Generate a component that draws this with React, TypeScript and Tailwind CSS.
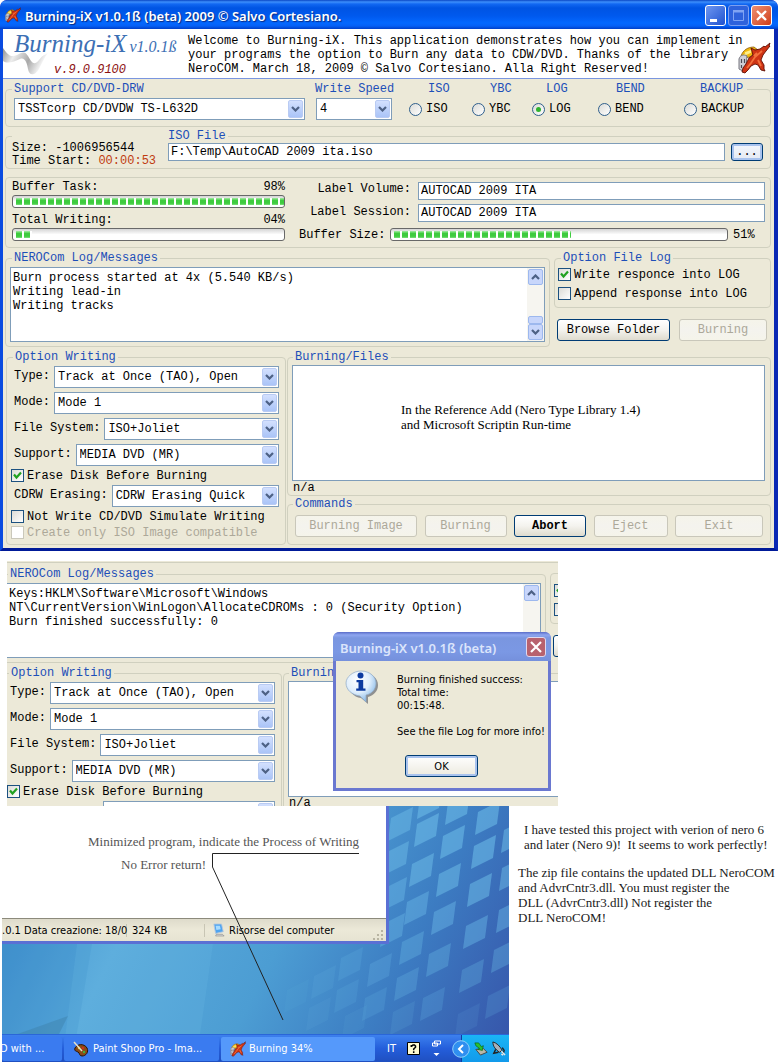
import { useId, type ReactNode } from "react";

const MONO = "font-['Liberation_Mono',monospace] text-[12px] leading-[14px]";
const UI = "font-['DejaVu_Sans_Condensed','DejaVu_Sans',sans-serif] text-[11px] leading-[13px]";
const TITLE = "font-['Noto_Sans',sans-serif] text-[13px] font-semibold";
const GROUP = "min-w-0 rounded-[4px] border border-[#d0d0bf]";
const LEGEND = "px-[2px] leading-[12px] text-[#1d4fb8]";

function NeroIcon({ className }: { className: string }) {
  return (
    <svg viewBox="0 0 33 32" className={className} aria-hidden="true">
      <path d="M3 14C5 8 10 5 16 5l4 3-8 7-6 1Z" fill="#f2b90f" stroke="#8a5a08" strokeWidth=".8" />
      <path d="M7 11l8-3M6 13l7-3" stroke="#fff08a" strokeWidth="1.400" />
      <path d="M1 17c1-4 5-5 8-3l-1 10-3 5-4-2Z" fill="#cfcfd6" stroke="#77777f" strokeWidth="1" />
      <path d="M3.500 17v4m3-4v4M3.500 23v3" stroke="#4b4b55" strokeWidth="1.200" />
      <path
        d="M13 6l4 2 5-1 4-3 1 1 5-4-1 3 1 0-4 5-3 4-2 5 3 5 0 4 1 2-4-1-3-5-3-1-4 2-3 4-3 3-3-1 1-4 3-4 3-6 4-3Z"
        fill="#cf3414"
        stroke="#5f0f05"
        strokeWidth=".9"
      />
      <path d="M24 9l-7 6-4 6-4 5M20 18l3 6M19 11l-3 3" stroke="#f4703c" strokeWidth="1.800" fill="none" />
    </svg>
  );
}

function Chevron({ up = false }: { up?: boolean }) {
  return (
    <svg viewBox="0 0 9 6" className="h-[6px] w-[9px]" aria-hidden="true">
      <path d={up ? "M1 5 4.500 1.500 8 5" : "M1 1 4.500 4.500 8 1"} fill="none" stroke="#4d6185" strokeWidth="2.200" />
    </svg>
  );
}

function Combo({ id, value, className = "", label }: { id?: string; value: string; className?: string; label?: string }) {
  return (
    <span className={`relative flex h-[22px] ${className}`}>
      <select
        id={id}
        aria-label={label}
        className="w-full appearance-none border border-[#7f9db9] bg-white pl-[3px] pr-[20px] text-black outline-none"
      >
        <option>{value}</option>
      </select>
      <span className="pointer-events-none absolute right-[2px] top-[2px] flex h-[18px] w-[15px] items-center justify-center rounded-[2px] border border-[#b9cbf3] bg-linear-to-b from-[#d3e0fe] to-[#aac4f7]">
        <Chevron />
      </span>
    </span>
  );
}

function ComboRow({ label, value }: { label: string; value: string }) {
  const id = useId();
  return (
    <div className="flex gap-[4px] pl-[5px]">
      <label htmlFor={id} className="shrink-0 pt-[3px]">
        {label}
      </label>
      <Combo id={id} value={value} className="min-w-0 flex-1" />
    </div>
  );
}

function Check({ label, name, checked = false, disabled = false }: { label?: string; name?: string; checked?: boolean; disabled?: boolean }) {
  return (
    <label className={`flex h-[13px] items-center gap-[3px] whitespace-nowrap ${disabled ? "text-[#aca899]" : ""}`}>
      <span className="relative flex size-[13px] shrink-0">
        <input
          type="checkbox"
          aria-label={name}
          defaultChecked={checked}
          disabled={disabled}
          className="peer size-[13px] appearance-none border border-[#1c5180] bg-linear-to-br from-[#dcdcd7] to-white disabled:border-[#cac8bb] disabled:from-white"
        />
        <svg viewBox="0 0 13 13" className="pointer-events-none absolute inset-0 hidden peer-checked:block" aria-hidden="true">
          <path d="M3 5.500 5.500 8.500 10 3.500" fill="none" stroke="#21a121" strokeWidth="2.200" />
        </svg>
      </span>
      {label}
    </label>
  );
}

function Radio({ label, checked = false }: { label: string; checked?: boolean }) {
  return (
    <label className="flex items-center gap-[4px]">
      <span className="relative flex size-[13px]">
        <input
          type="radio"
          name="mode"
          defaultChecked={checked}
          className="peer size-[13px] appearance-none rounded-full border border-[#2f5f8c] bg-linear-to-br from-[#dcdcd7] to-white"
        />
        <span className="pointer-events-none absolute left-[4px] top-[4px] hidden size-[5px] rounded-full bg-[#2fb32f] peer-checked:block" />
      </span>
      {label}
    </label>
  );
}

function Button({ children, name, className = "", disabled = false }: { children?: ReactNode; name?: string; className?: string; disabled?: boolean }) {
  return (
    <button
      type="button"
      aria-label={name}
      disabled={disabled}
      className={`h-[22px] whitespace-nowrap rounded-[3px] border border-[#003c74] bg-linear-to-b from-white via-[#f4f3ee] to-[#dedbce] disabled:border-[#c9c7ba] disabled:from-[#f5f4ea] disabled:to-[#f5f4ea] disabled:text-[#aca899] ${className}`}
    >
      {children}
    </button>
  );
}

function Bar({ fill, value, label, className = "" }: { fill: number; value: number; label: string; className?: string }) {
  return (
    <div
      role="progressbar"
      aria-label={label}
      aria-valuenow={value}
      className={`h-[13px] rounded-[3px] border border-[#686868] bg-linear-to-b from-[#d5d5d5] via-white to-white py-[2px] pl-[3px] ${className}`}
    >
      <div className="h-full overflow-hidden" style={{ width: `${fill}%` }}>
        <div className="h-full bg-[repeating-linear-gradient(90deg,transparent_0_6px,#ffffff_6px_8px),linear-gradient(#a5eba5,#3ecb3e_35%,#3ecb3e_75%,#7fdf7f)]" />
      </div>
    </div>
  );
}

function LogGroup({ text, thumb = false }: { text: string; thumb?: boolean }) {
  return (
    <fieldset className={`${GROUP} flex-1 px-[4px] pb-[4px]`}>
      <legend className={`${LEGEND} ml-[2px]`}>NEROCom Log/Messages</legend>
      <div className="relative mt-[3px] flex h-[75px]">
        <textarea
          aria-label="Log messages"
          readOnly
          defaultValue={text}
          className="w-full resize-none overflow-hidden border border-[#7f9db9] bg-white pl-[2px] pr-[18px] pt-[3px] outline-none"
        />
        <div className="absolute bottom-[1px] right-[1px] top-[1px] flex w-[17px] flex-col bg-[#f6f5f0] p-[1px]">
          <button type="button" aria-label="Scroll up" className="flex h-[16px] items-center justify-center rounded-[2px] border border-[#9db8ee] bg-[#c8d6fb]">
            <Chevron up />
          </button>
          {thumb && <div className="mt-auto h-[8px] rounded-[2px] border border-[#9db8ee] bg-[#c8d6fb]" />}
          <button type="button" aria-label="Scroll down" className={`${thumb ? "" : "mt-auto"} flex h-[16px] items-center justify-center rounded-[2px] border border-[#9db8ee] bg-[#c8d6fb]`}>
            <Chevron />
          </button>
        </div>
      </div>
    </fieldset>
  );
}

function WritingOptions() {
  return (
    <>
      <div className="-ml-[2px] flex flex-col gap-[4px]">
        <ComboRow label="Type:" value="Track at Once (TAO), Open" />
        <ComboRow label="Mode:" value="Mode 1" />
        <ComboRow label="File System:" value="ISO+Joliet" />
        <ComboRow label="Support:" value="MEDIA DVD (MR)" />
      </div>
      <Check label="Erase Disk Before Burning" checked />
    </>
  );
}

/* Lower part of the window: log, options, file list and commands. */
function LowerPanels() {
  return (
    <>
      <div className="flex gap-[4px]">
        <LogGroup thumb text={"Burn process started at 4x (5.540 KB/s)\nWriting lead-in\nWriting tracks"} />
        <div className="w-[217px] shrink-0">
          <fieldset className={`${GROUP} flex flex-col pb-[7px] pl-[3px]`}>
            <legend className={`${LEGEND} ml-[3px]`}>Option File Log</legend>
            <div className="flex flex-col gap-[6px] pt-[4px]">
              <Check label="Write responce into LOG" checked />
              <Check label="Append response into LOG" />
            </div>
          </fieldset>
          <div className="mt-[11px] flex justify-between pl-[3px] pr-[4px]">
            <Button className="w-[113px]">Browse Folder</Button>
            <Button className="w-[88px]" disabled>
              Burning
            </Button>
          </div>
        </div>
      </div>

      <div className="mt-[4px] flex gap-[1px] pl-[1px]">
        <fieldset className={`${GROUP} w-[280px] shrink-0 pb-[4px] pl-[4px] pr-[6px]`}>
          <legend className={`${LEGEND} ml-[2px]`}>Option Writing</legend>
          <div className="flex flex-col gap-[3px] pt-[3px]">
            <WritingOptions />
            <div className="-ml-[2px]">
              <ComboRow label="CDRW Erasing:" value="CDRW Erasing Quick" />
            </div>
            <Check label="Not Write CD/DVD Simulate Writing" />
            <Check label="Create only ISO Image compatible" disabled />
          </div>
        </fieldset>
        <div className="min-w-0 flex-1">
          <fieldset className={`${GROUP} pl-[4px] pr-[5px]`}>
            <legend className={`${LEGEND} ml-[1px]`}>Burning/Files</legend>
            <div className="mt-[2px] flex h-[116px] items-center border border-[#7f9db9] bg-white pl-[108px] pb-[12px]">
              <p className="font-['Liberation_Serif',serif] text-[13px] leading-[15px]">
                In the Reference Add (Nero Type Library 1.4)
                <br />
                and Microsoft Scriptin Run-time
              </p>
            </div>
            <p className="pl-[1px]">n/a</p>
          </fieldset>
          <fieldset className={`${GROUP} mt-[2px] px-[7px] pb-[7px]`}>
            <legend className={`${LEGEND} -ml-[2px]`}>Commands</legend>
            <div className="flex justify-between pt-[5px]">
              <Button className="w-[122px]" disabled>
                Burning Image
              </Button>
              <Button className="w-[82px]" disabled>
                Burning
              </Button>
              <Button className="w-[72px] font-bold">Abort</Button>
              <Button className="w-[74px]" disabled>
                Eject
              </Button>
              <Button className="w-[88px]" disabled>
                Exit
              </Button>
            </div>
          </fieldset>
        </div>
      </div>
    </>
  );
}

function TitleBar() {
  const frame = "flex size-[21px] items-center justify-center rounded-[3px] border border-white";
  return (
    <div className="flex h-[29px] items-center rounded-t-[7px] bg-[linear-gradient(#0a46c4_0,#3d8ffc_2px,#1268f2_4px,#0054e3_8px,#0059ee_16px,#0468ff_23px,#0560f5_26px,#003fc8_29px)] pl-[5px] pr-[6px]">
      <NeroIcon className="size-[16px]" />
      <h1 className={`${TITLE} ml-[4px] flex-1 whitespace-nowrap pt-[2px] text-white [text-shadow:1px_1px_1px_#0a2a80]`}>
        Burning-iX v1.0.1ß (beta) 2009 © Salvo Cortesiano.
      </h1>
      <div className="flex gap-[2px] pt-[2px]">
        <button type="button" aria-label="Minimize" className={`${frame} bg-linear-to-br from-[#6f96f0] to-[#1f51cf]`}>
          <svg viewBox="0 0 19 19" className="size-full" aria-hidden="true">
            <path d="M4 13h7v3H4z" fill="#fff" />
          </svg>
        </button>
        <button type="button" aria-label="Maximize" disabled className="flex size-[21px] rounded-[3px] border border-[#7d9ff0] bg-[#2e62dc]">
          <svg viewBox="0 0 19 19" className="size-full" aria-hidden="true">
            <path d="M4.500 5v9.500h10V5" fill="none" stroke="#7fa3f3" />
            <path d="M4 4h11v2.500H4z" fill="#7fa3f3" />
          </svg>
        </button>
        <button type="button" aria-label="Close" className={`${frame} bg-linear-to-br from-[#ee8f70] to-[#cf3a12]`}>
          <svg viewBox="0 0 19 19" className="size-full" aria-hidden="true">
            <path d="m5 5 9 9m0-9-9 9" stroke="#fff" strokeWidth="2.300" />
          </svg>
        </button>
      </div>
    </div>
  );
}

function Header() {
  return (
    <header className="flex h-[50px] justify-between border-b border-[#7a96df] bg-white">
      <div className="relative w-[185px] shrink-0">
        <svg viewBox="0 0 60 34" className="absolute bottom-0 left-0 h-[34px] w-[60px]" aria-hidden="true">
          <defs>
            <linearGradient id="swoosh" x2="1" y2="0.300">
              <stop offset="0" stopColor="#8f8f8f" />
              <stop offset=".3" stopColor="#ededed" />
              <stop offset=".65" stopColor="#a9a9a9" />
              <stop offset="1" stopColor="#ffffff" />
            </linearGradient>
          </defs>
          <path d="M0 4c6 9 9 9 14 7 5-3 8-4 11 1 4 7 6 10 11 4 3-4 5-5 9-7-4 5-6 10-9 16-4 7-10 7-11 0-1-6-3-12-8-10C11 18 4 20 0 17Z" fill="url(#swoosh)" />
        </svg>
        <div className="relative flex flex-col pl-[11px] pt-[2px] font-['Liberation_Serif',serif] italic leading-[25px] text-[#3c6fb4]">
          <span className="flex items-baseline gap-[3px] whitespace-nowrap">
            <span className="text-[25px]">Burning-iX</span>
            <span className="text-[16px]">v1.0.1ß</span>
          </span>
          <span className={`${MONO} pl-[40px] pt-[4px] text-[#8b1010]`}>v.9.0.9100</span>
        </div>
      </div>
      <p className="min-w-0 flex-1 whitespace-nowrap pt-[5px] text-black">
        Welcome to Burning-iX. This application demonstrates how you can implement in
        <br />
        your programs the option to Burn any data to CDW/DVD. Thanks of the library
        <br />
        NeroCOM. March 18, 2009 © Salvo Cortesiano. Alla Right Reserved!
      </p>
      <NeroIcon className="mr-[3px] mt-[13px] h-[32px] w-[33px] shrink-0" />
    </header>
  );
}

function MainWindow() {
  const field = "h-[18px] min-w-0 flex-1 border border-[#7f9db9] bg-white px-[2px] text-black outline-none";
  return (
    <section className={`${MONO} overflow-hidden rounded-t-[7px] bg-[#0831d9] text-black`}>
      <TitleBar />
      <div className="border-b-[3px] border-l-[3px] border-r-[4px] border-b-[#001a98] border-l-[#0a4be0] border-r-[#0a28b4] bg-[#ece9d8]">
        <Header />
        <div className="pb-[3px] pl-[2px] pr-[3px]">
          <fieldset className={`${GROUP} mt-[4px] pb-[6px] pl-[8px]`}>
            <legend className={`${LEGEND} -ml-[2px] grid w-[calc(100%-21px)] grid-cols-[1fr_113px_62px_56px_70px_84px_45px]`}>
              <span>Support CD/DVD-DRW</span>
              <span className="whitespace-nowrap">Write Speed</span>
              <span>ISO</span>
              <span>YBC</span>
              <span>LOG</span>
              <span>BEND</span>
              <span>BACKUP</span>
            </legend>
            <div className="grid grid-cols-[1fr_93px_63px_60px_66px_86px_86px] pt-[3px]">
              <Combo label="Support CD/DVD-DRW" value="TSSTcorp CD/DVDW TS-L632D" className="mr-[11px]" />
              <Combo label="Write Speed" value="4" className="w-[76px]" />
              <Radio label="ISO" />
              <Radio label="YBC" />
              <Radio label="LOG" checked />
              <Radio label="BEND" />
              <Radio label="BACKUP" />
            </div>
          </fieldset>

          <fieldset className={`${GROUP} mt-[3px] pl-[6px] pr-[7px]`}>
            <legend className={`${LEGEND} pl-[156px]`}>ISO File</legend>
            <div className="flex h-[26px]">
              <p className="w-[156px] shrink-0 leading-[13px]">
                Size: -1006956544
                <br />
                Time Start: <span className="text-[#c03c10]">00:00:53</span>
              </p>
              <div className="flex flex-1 gap-[6px] pt-[1px]">
                <input aria-label="ISO File" defaultValue={"F:\\Temp\\AutoCAD 2009 ita.iso"} className={field} />
                <button
                  type="button"
                  aria-label="Browse ISO file"
                  className="h-[18px] w-[32px] rounded-[3px] border border-[#003c74] bg-linear-to-b from-[#f4f7fd] to-[#e4e9f2] leading-[14px] shadow-[inset_0_0_0_2px_#a9c3ee]"
                >
                  ...
                </button>
              </div>
            </div>
          </fieldset>

          <div className={`${GROUP} mt-[8px] flex pb-[6px] pl-[6px] pr-[5px]`}>
            <div className="w-[273px] shrink-0 pt-[2px]">
              <p className="flex justify-between">
                <span>Buffer Task:</span>
                <span>98%</span>
              </p>
              <Bar label="Buffer Task" value={98} fill={100} className="mt-[1px]" />
              <p className="mt-[5px] flex justify-between">
                <span>Total Writing:</span>
                <span>04%</span>
              </p>
              <Bar label="Total Writing" value={4} fill={6} className="mt-[1px]" />
            </div>
            <div className="ml-[14px] flex flex-1 flex-col pt-[4px]">
              <div className="flex gap-[7px]">
                <label htmlFor="volume" className="w-[112px] text-right">
                  Label Volume:
                </label>
                <input id="volume" defaultValue="AUTOCAD 2009 ITA" className={field} />
              </div>
              <div className="mt-[4px] flex gap-[7px]">
                <label htmlFor="session" className="w-[112px] pt-[1px] text-right">
                  Label Session:
                </label>
                <input id="session" defaultValue="AUTOCAD 2009 ITA" className={field} />
              </div>
              <div className="mt-[6px] flex h-[13px] items-center gap-[5px]">
                <span className="leading-[12px]">Buffer Size:</span>
                <Bar label="Buffer Size" value={51} fill={53} className="flex-1" />
                <span className="w-[32px] leading-[12px]">51%</span>
              </div>
            </div>
          </div>

          <div className="mt-[4px]">
            <LowerPanels />
          </div>
        </div>
      </div>
    </section>
  );
}

function MessageDialog() {
  return (
    <div role="dialog" aria-label="Burning-iX v1.0.1ß (beta)" className="absolute left-[326px] top-[71px] w-[218px] rounded-t-[7px] border-x-[3px] border-b-[3px] border-[#6a78d0] bg-[#ece9d8]">
      <div className="-mx-[3px] flex h-[29px] items-center justify-between rounded-t-[6px] bg-[linear-gradient(#5a6cc8_0,#8ea6f0_3px,#7a96e0_6px,#7b98e4_20px,#7590dc_29px)] pl-[7px] pr-[5px]">
        <h2 className={`${TITLE} whitespace-nowrap pt-[2px] text-[#dce5fb]`}>Burning-iX v1.0.1ß (beta)</h2>
        <button type="button" aria-label="Close message" className="flex size-[20px] rounded-[3px] border border-[#e0d8ee] bg-[#b8626e]">
          <svg viewBox="0 0 18 18" className="size-full" aria-hidden="true">
            <path d="m4 4 10 10m0-10L4 14" stroke="#fff" strokeWidth="2.200" />
          </svg>
        </button>
      </div>
      <div className={`${UI} flex flex-col px-[9px] pb-[11px] pt-[12px] text-black`}>
        <div className="flex">
          <svg viewBox="0 0 34 34" className="-mt-[3px] size-[34px] shrink-0" aria-hidden="true">
            <defs>
              <radialGradient id="bubble" cx=".4" cy=".3" r=".7">
                <stop offset="0" stopColor="#ffffff" />
                <stop offset=".55" stopColor="#e1effc" />
                <stop offset="1" stopColor="#8bbbe8" />
              </radialGradient>
            </defs>
            <path d="M18 3c9 0 15 5 15 12 0 6-4 10-10 12v7l-7-6C8 27 4 21 4 15 4 8 10 3 18 3Z" fill="#666a72" opacity=".7" />
            <path d="M16 1c9 0 15 6 15 12 0 6-4 11-10 12v7l-6-6C7 25 1 20 1 13 1 7 8 1 16 1Z" fill="url(#bubble)" stroke="#8fa9c6" strokeWidth=".7" />
            <circle cx="15.500" cy="5.600" r="3" fill="#0d3ba0" />
            <path d="M11.500 10h6.700v8.500h2.300v2.200h-9.300v-2.200h2.300v-6.300h-2Z" fill="#0d3ba0" />
          </svg>
          <p className="ml-[18px] whitespace-nowrap">
            Burning finished success:
            <br />
            Total time:
            <br />
            00:15:48.
            <br />
            <br />
            See the file Log for more info!
          </p>
        </div>
        <button
          type="button"
          className="ml-[60px] mt-[17px] h-[22px] w-[73px] rounded-[3px] border border-[#003c74] bg-linear-to-b from-white to-[#eceadf] shadow-[inset_0_0_0_2px_#a9c3ee]"
        >
          OK
        </button>
      </div>
    </div>
  );
}

/* A cut-out of the window once burning has finished, with the message on top. */
function FinishedCrop() {
  return (
    <section className={`${MONO} relative ml-[7px] mt-[10px] h-[245px] w-[551px] overflow-hidden bg-[#ece9d8] text-black`}>
      <div className="-ml-[6px] w-[766px] pt-[1px]">
        <div className="mb-[5px] h-px bg-[#d0d0bf]" />
        <div className="flex gap-[4px]">
          <LogGroup
            text={"Keys:HKLM\\Software\\Microsoft\\Windows\nNT\\CurrentVersion\\WinLogon\\AllocateCDROMs : 0 (Security Option)\nBurn finished successfully: 0"}
          />
          <div className="w-[217px] shrink-0 pt-[5px]">
            <div className={`${GROUP} flex flex-col gap-[6px] pb-[7px] pl-[3px] pt-[10px]`}>
              <Check name="Write responce into LOG" checked />
              <Check name="Append response into LOG" />
            </div>
            <div className="mt-[11px] pl-[3px]">
              <Button name="Browse Folder" className="w-[113px]" />
            </div>
          </div>
        </div>
        <div className="mt-[4px] flex gap-[1px] pl-[1px]">
          <fieldset className={`${GROUP} w-[280px] shrink-0 pb-[4px] pl-[4px] pr-[6px]`}>
            <legend className={`${LEGEND} ml-[2px]`}>Option Writing</legend>
            <div className="flex flex-col gap-[3px] pt-[3px]">
              <WritingOptions />
              <Combo label="CDRW Erasing" value="" className="ml-[96px]" />
            </div>
          </fieldset>
          <fieldset className={`${GROUP} min-w-0 flex-1 pl-[4px] pr-[5px]`}>
            <legend className={`${LEGEND} ml-[1px]`}>Burning/Files</legend>
            <div className="mt-[2px] h-[116px] border border-[#7f9db9] bg-white" />
            <p className="pl-[1px] leading-[12px]">n/a</p>
          </fieldset>
        </div>
      </div>
      <MessageDialog />
    </section>
  );
}

/* Centres of the wallpaper tiles and their opacity. */
const TILES: [number, number, number][] = [
  [401, 18, 0.5], [397, 52, 0.5], [395, 88, 0.45], [393, 124, 0.4],
  [430, -4, 0.6], [427, 24, 0.6], [422, 64, 0.55], [417, 102, 0.45], [412, 142, 0.35], [407, 178, 0.28], [403, 212, 0.15],
  [458, 2, 0.6], [453, 36, 0.6], [449, 74, 0.55], [444, 112, 0.45], [439, 154, 0.35], [433, 198, 0.22],
  [488, 12, 0.6], [484, 46, 0.6], [480, 84, 0.55], [476, 126, 0.45], [472, 170, 0.3], [468, 214, 0.12],
  [514, 30, 0.55], [512, 68, 0.5], [509, 110, 0.45], [504, 150, 0.35], [498, 196, 0.2],
  [380, 164, 0.25], [375, 198, 0.2], [351, 158, 0.2], [347, 190, 0.16], [324, 176, 0.14], [319, 208, 0.1], [355, 216, 0.1], [297, 190, 0.08],
];

function Wallpaper() {
  return (
    <svg viewBox="0 0 507 256" preserveAspectRatio="none" className="absolute inset-0 size-full" aria-hidden="true">
      <defs>
        <linearGradient id="sky" x1="0" y1="0.600" x2="1" y2="0.850">
          <stop offset="0" stopColor="#4594cf" />
          <stop offset=".2" stopColor="#5aaadb" />
          <stop offset=".5" stopColor="#4c9dd3" />
          <stop offset=".75" stopColor="#3c7cc2" />
          <stop offset="1" stopColor="#3758ac" />
        </linearGradient>
      </defs>
      <rect width="507" height="256" fill="url(#sky)" />
      <path d="M70 256 90 138H0v118Z" fill="#2f84c4" opacity=".2" />
      <path d="M10 230 66 210 56 230Z" fill="#3a789f" opacity=".35" />
      <path d="M211 138 194 256H60L75 138Z" fill="#70bde4" opacity=".2" />
      {TILES.map(([x, y, opacity]) => (
        <path key={`${x}-${y}`} transform={`translate(${x - 2} ${y})`} d="m-10-6 22-11-3 23-22 11Z" fill="#6bb9e6" opacity={opacity} />
      ))}
    </svg>
  );
}

function Taskbar() {
  const task = "flex h-[24px] items-center whitespace-nowrap rounded-[2px] text-left text-white";
  return (
    <div className="relative flex h-[28px] items-center border-t border-[#2a66d8] bg-linear-to-b from-[#3d80ee] via-[#245edb] to-[#1f4fc0]">
      <button type="button" className={`${task} w-[60px] bg-[#3a7bf0]`}>
        <span className="-ml-[2px]">D with ...</span>
      </button>
      <button type="button" className={`${task} ml-[2px] w-[155px] gap-[4px] bg-[#3a7bf0] pl-[9px]`}>
        <svg viewBox="0 0 16 16" className="size-[16px]" aria-hidden="true">
          <path d="M2 7c2-4 9-5 12 0 2 4-1 8-5 8-3 0-2-3-4-4S1 10 2 7Z" fill="#8a4a16" stroke="#2b1404" />
          <circle cx="6" cy="7" r="1.200" fill="#e8d020" />
          <circle cx="10" cy="7" r="1.200" fill="#d03020" />
          <circle cx="11" cy="11" r="1.200" fill="#40b040" />
          <path d="M1 1 9 10" stroke="#e8e0c8" strokeWidth="1.500" />
        </svg>
        Paint Shop Pro - Ima...
      </button>
      <button type="button" className={`${task} ml-[2px] w-[154px] gap-[3px] bg-[#5599fb] pl-[9px]`}>
        <NeroIcon className="size-[16px]" />
        Burning 34%
      </button>
      <span className="ml-[12px] text-white">IT</span>
      <svg viewBox="0 0 13 13" className="ml-[11px] size-[13px]" aria-hidden="true">
        <path d="M.5.500h12v12H.5z" fill="#fffbd0" stroke="#000" />
        <path d="M4.300 5V3.800h1L6 3h1.500l1 1v1.300L6.700 7v1.300M6.700 9.300v1.700" stroke="#000" strokeWidth="1.500" fill="none" />
      </svg>
      <svg viewBox="0 0 9 18" className="ml-[12px] h-[18px] w-[9px]" aria-hidden="true">
        <path d="M2.500 1h6v3h-6zM.5 3h5v3h-5z" fill="#245edb" stroke="#fff" />
        <path d="M1.500 13h6l-3 3Z" fill="#fff" />
      </svg>
      <div className="ml-auto flex h-full w-[57px] items-center">
        <svg viewBox="0 0 18 18" className="relative z-10 size-[18px]" aria-hidden="true">
          <circle cx="9" cy="9" r="8.300" fill="#2f8ff0" stroke="#8fd0fa" />
          <path d="M11 5 7 9l4 4" fill="none" stroke="#fff" strokeWidth="2" />
        </svg>
        <div className="-ml-[9px] flex h-full flex-1 items-center gap-[3px] border-l border-[#0f3fa0] bg-linear-to-b from-[#1ab5f5] to-[#129aeb] pl-[11px]">
          <svg viewBox="0 0 16 16" className="size-[15px]" aria-hidden="true">
            <path d="m3 9 8-1 4 4-7 3Z" fill="#b8b8a8" stroke="#444" />
            <path d="M2 2h4l3 4 2-1-1 5-5-1 2-1-4-3Z" fill="#28c030" stroke="#0a6010" strokeWidth=".7" />
          </svg>
          <svg viewBox="0 0 16 16" className="size-[15px]" aria-hidden="true">
            <path d="M2 1c4 1 7 4 10 9l-3 2C5 9 2 6 2 1Z" fill="#a8b0b8" stroke="#222" />
            <path d="m5 9-2 4 5-1m4-5 2 3-1 4" stroke="#222" strokeWidth="1.500" fill="none" />
            <path d="m11 11 4 4m-4-1 2 1" stroke="#e8e8e8" strokeWidth="1.500" />
          </svg>
        </div>
      </div>
    </div>
  );
}

function DesktopCrop() {
  return (
    <section className={`${UI} relative flex h-[256px] w-[507px] shrink-0 flex-col justify-between overflow-hidden`}>
      <Wallpaper />
      <div className="relative w-[387px] border-b-[3px] border-r-[3px] border-[#5a70d4] bg-white">
        <div className="h-[112px] pt-[28px] font-['Liberation_Serif',serif] text-[13px] leading-[15px] text-[#555555]">
          <p className="pl-[86px]">Minimized program, indicate the Process of Writing</p>
          <p className="mt-[8px] pl-[119px]">No Error return!</p>
        </div>
        <div className="flex h-[23px] items-center whitespace-nowrap border-t border-[#8c8a7c] bg-linear-to-b from-[#dedbcb] via-[#ece9d8] to-[#e6e3d2] text-black">
          <span className="w-[125px] border-r border-[#c8c5b4]">.0.1 Data creazione: 18/0</span>
          <span className="w-[78px] border-r border-[#c8c5b4] pl-[5px]">324 KB</span>
          <svg viewBox="0 0 14 16" className="ml-[8px] h-[16px] w-[12px]" aria-hidden="true">
            <path d="M1 1h9l2 9-9 2Z" fill="#4fa4f0" stroke="#b8c8dc" />
            <path d="M3 3h5l1 4-5 1Z" fill="#a8dcff" />
            <path d="M4 13h7l2 2H3Z" fill="#d8d8d8" stroke="#777" strokeWidth=".6" />
          </svg>
          <span className="ml-[4px] flex-1">Risorse del computer</span>
          <svg viewBox="0 0 12 12" className="mr-[1px] size-[12px] self-end" aria-hidden="true">
            <path d="M8 1h2v2H8zM8 5h2v2H8zM4 5h2v2H4zM8 9h2v2H8zM4 9h2v2H4zM0 9h2v2H0z" fill="#b8b4a2" />
          </svg>
        </div>
      </div>
      <Taskbar />
      <svg viewBox="0 0 507 256" className="pointer-events-none absolute inset-0 size-full" aria-hidden="true">
        <path d="M357 47.500H210.500V61L281 214" fill="none" stroke="#222222" strokeWidth="1" />
      </svg>
    </section>
  );
}

export default function App() {
  return (
    <main className="min-h-screen bg-white pb-[2px]">
      <MainWindow />
      <FinishedCrop />
      <div className="flex pl-[2px]">
        <DesktopCrop />
        <aside className="flex-1 whitespace-nowrap pl-[9px] pt-[16px] font-['Liberation_Serif',serif] text-[13px] leading-[15px] text-[#1a1a1a]">
          <p className="pl-[6px]">
            I have tested this project with verion of nero 6
            <br />
            and later (Nero 9)!&nbsp; It seems to work perfectly!
          </p>
          <p className="mt-[13px]">
            The zip file contains the updated DLL NeroCOM
            <br />
            and AdvrCntr3.dll. You must register the
            <br />
            DLL (AdvrCntr3.dll) Not register the
            <br />
            DLL NeroCOM!
          </p>
        </aside>
      </div>
    </main>
  );
}
